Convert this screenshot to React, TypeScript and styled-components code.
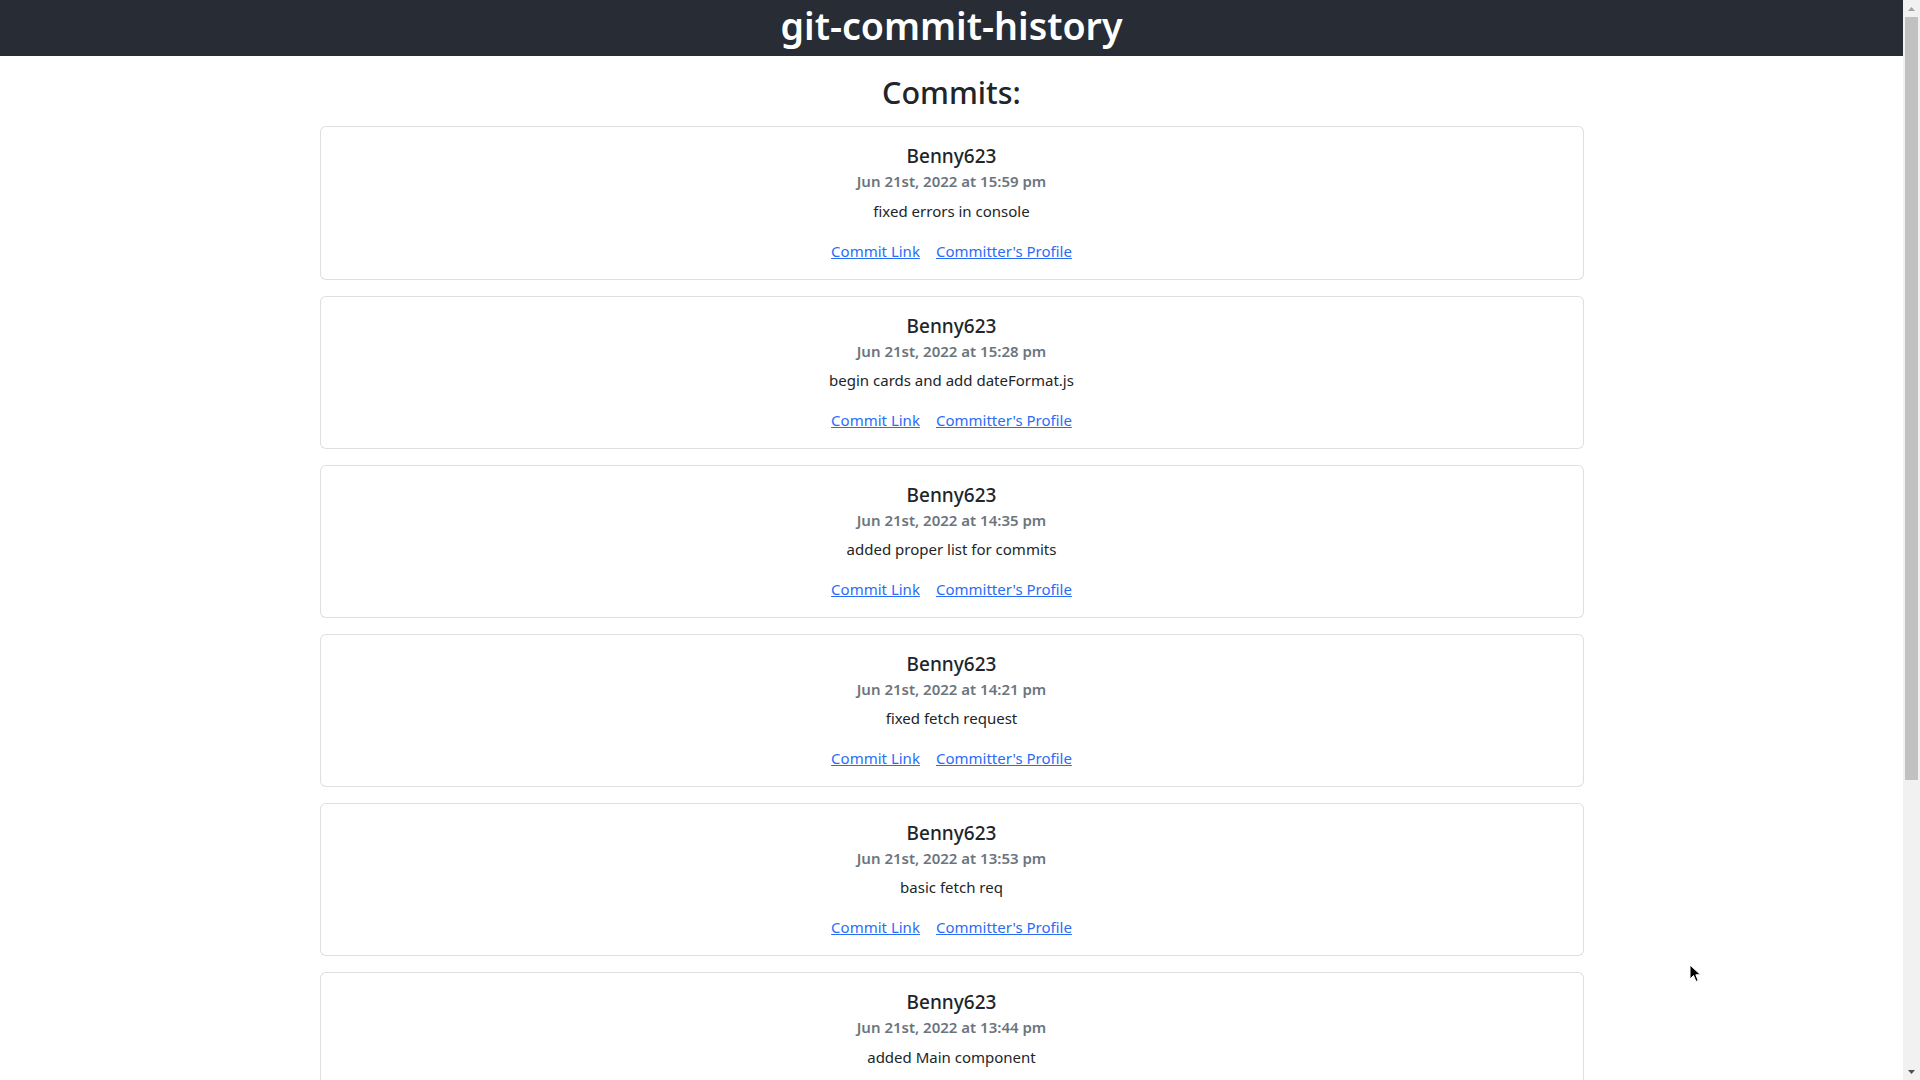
import React from "react";
import styled, { createGlobalStyle } from "styled-components";

const GlobalStyle = createGlobalStyle`
  html, body {
    margin: 0;
    padding: 0;
    height: 100%;
    overflow: hidden;
    background: #ffffff;
  }
  body {
    font-family: "Noto Sans", "Open Sans", "Liberation Sans", sans-serif;
    color: #212529;
    font-size: 15px;
    line-height: 24px;
  }
  * { box-sizing: border-box; }
`;

const Shell = styled.div`
  display: flex;
  height: 100vh;
  overflow: hidden;
`;

const Page = styled.div`
  position: relative;
  flex: 1;
  min-width: 0;
  overflow: hidden;
`;

const Header = styled.header`
  height: 56px;
  background: #282c34;
  display: flex;
  align-items: center;
  justify-content: center;
  padding-bottom: 5px;
`;

const Title = styled.h1`
  margin: 0;
  color: #ffffff;
  font-size: 37.6px;
  font-weight: 600;
  line-height: 48px;
`;

const Main = styled.main`
  display: flex;
  flex-direction: column;
  align-items: center;
  padding-top: 17px;
`;

const Heading = styled.h2`
  margin: 0 0 15px;
  font-size: 30.5px;
  font-weight: 500;
  line-height: 38.4px;
  color: #212529;
`;

const List = styled.div`
  width: 1264px;
  display: flex;
  flex-direction: column;
  gap: 16px;
`;

const Card = styled.article`
  border: 1px solid rgba(0, 0, 0, 0.125);
  border-radius: 6px;
  padding: 17px 16px 16px;
  text-align: center;
  background: #fff;
`;

const Author = styled.h5`
  margin: 0 0 8px;
  font-size: 19px;
  font-weight: 500;
  line-height: 24px;
  color: #212529;
`;

const DateLine = styled.h6`
  margin: -4px 0 7px;
  font-size: 15px;
  font-weight: 600;
  line-height: 19.2px;
  color: #6c757d;
`;

const Message = styled.p`
  margin: 0 0 16px;
  font-size: 15px;
  line-height: 24px;
`;

const Links = styled.div`
  display: flex;
  justify-content: center;
  gap: 16px;
  line-height: 24px;
`;

const CardLink = styled.a`
  color: #2b6cf7;
  text-decoration: underline;
  font-size: 15px;
`;

const Scrollbar = styled.div`
  width: 17px;
  flex: none;
  background: #f1f1f1;
  display: flex;
  flex-direction: column;
`;

const ArrowButton = styled.div`
  height: 17px;
  display: flex;
  align-items: center;
  justify-content: center;
`;

const Track = styled.div`
  flex: 1;
  display: flex;
  flex-direction: column;
  padding: 0 2px;
`;

const Thumb = styled.div`
  height: 763px;
  background: #c1c1c1;
`;

const Cursor = styled.svg`
  position: absolute;
  left: 1689px;
  top: 964px;
`;

type Commit = { author: string; date: string; message: string };

const commits: Commit[] = [
  { author: "Benny623", date: "Jun 21st, 2022 at 15:59 pm", message: "fixed errors in console" },
  { author: "Benny623", date: "Jun 21st, 2022 at 15:28 pm", message: "begin cards and add dateFormat.js" },
  { author: "Benny623", date: "Jun 21st, 2022 at 14:35 pm", message: "added proper list for commits" },
  { author: "Benny623", date: "Jun 21st, 2022 at 14:21 pm", message: "fixed fetch request" },
  { author: "Benny623", date: "Jun 21st, 2022 at 13:53 pm", message: "basic fetch req" },
  { author: "Benny623", date: "Jun 21st, 2022 at 13:44 pm", message: "added Main component" },
];

export default function App() {
  return (
    <>
      <GlobalStyle />
      <Shell>
        <Page>
          <Header>
            <Title>git-commit-history</Title>
          </Header>
          <Main>
            <Heading>Commits:</Heading>
            <List>
              {commits.map((c, i) => (
                <Card key={i}>
                  <Author>{c.author}</Author>
                  <DateLine>{c.date}</DateLine>
                  <Message>{c.message}</Message>
                  <Links>
                    <CardLink href="#">Commit Link</CardLink>
                    <CardLink href="#">Committer's Profile</CardLink>
                  </Links>
                </Card>
              ))}
            </List>
          </Main>
          <Cursor width="14" height="20" viewBox="0 0 14 20">
            <path d="M1 1 L1 15 L4.5 11.5 L7 17.5 L9.2 16.5 L6.8 10.8 L11.5 10.8 Z" fill="#000" stroke="#fff" strokeWidth="1" strokeLinejoin="round" />
          </Cursor>
        </Page>
        <Scrollbar>
          <ArrowButton>
            <svg width="7" height="4" viewBox="0 0 7 4">
              <path d="M0 4 L3.5 0 L7 4 Z" fill="#a3a3a3" />
            </svg>
          </ArrowButton>
          <Track>
            <Thumb />
          </Track>
          <ArrowButton>
            <svg width="7" height="4" viewBox="0 0 7 4">
              <path d="M0 0 L7 0 L3.5 4 Z" fill="#505050" />
            </svg>
          </ArrowButton>
        </Scrollbar>
      </Shell>
    </>
  );
}
